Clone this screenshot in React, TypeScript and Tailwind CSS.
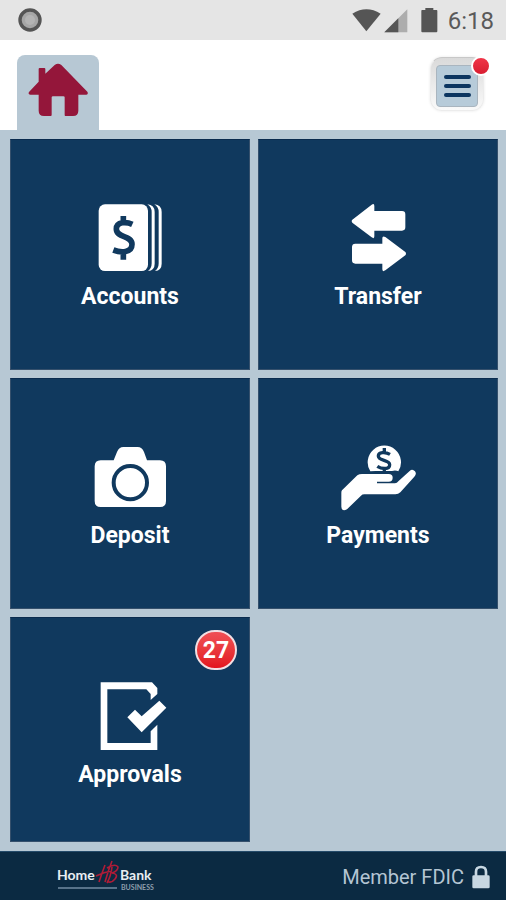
import type { ReactNode } from 'react';

function StatusBar() {
  return (
    <div className="flex h-10 shrink-0 items-center bg-[#e5e5e5] pl-[18px] pr-3 text-[#5a5a5a]">
      <svg width="24" height="24" viewBox="0 0 24 24" aria-hidden="true">
        <circle cx="12" cy="12" r="10" fill="#a6a6a6" stroke="#555" strokeWidth="3.4" />
        <circle cx="12" cy="12" r="5" fill="#b4b4b4" />
      </svg>
      <svg className="ml-auto" width="88" height="26" viewBox="0 0 264 78" aria-hidden="true">
        <path d="M1 20 Q43 -6 86 20 L43 73Z" fill="#555" />
        <path d="M166 7 V76 H97Z" fill="#adadad" />
        <path d="M139 34 V76 H97Z" fill="#555" />
        <path d="M210 9 H220 V3 H244 V9 H254 Q256 9 256 12 V73 Q256 76 253 76 H211 Q208 76 208 73 V12 Q208 9 210 9Z" fill="#555" />
      </svg>
      <span className="ml-2 pt-0.5 text-2xl leading-none">6:18</span>
    </div>
  );
}

function Header() {
  return (
    <header className="flex h-[90px] shrink-0 items-start justify-between bg-white pl-[17px] pr-[22px] pt-[15px]">
      <button
        type="button"
        aria-label="Home"
        className="flex h-[75px] w-[82px] justify-center rounded-t-lg bg-[#b7c8d4] pt-2"
      >
        <svg width="60" height="54" viewBox="84 189 180 162" fill="#94163a" aria-hidden="true">
          <path d="M116 207 Q116 204 119 204 H133 Q136 204 136 207 V221 L164 195 Q174 188 184 195 L262 275 Q266 282 259 284 H235 V332 Q235 348 219 348 H196 Q194 348 194 345 V292 Q194 289 190 289 H159 Q155 289 155 292 V345 Q155 348 152 348 H132 Q116 348 116 332 V284 H91 Q83 282 87 276 L116 245Z" />
        </svg>
      </button>
      <button
        type="button"
        aria-label="Menu"
        className="relative mt-0.5 flex size-[54px] justify-center rounded-xl border border-[#ececec] border-t-[#c8c8c8] bg-linear-to-b from-[#dadada] to-[#fafafa] pt-[7px] shadow-[0_0_3px_#e8e8e8]"
      >
        <span className="flex h-[42px] w-[42px] flex-col items-center justify-center gap-[5px] rounded-sm border border-[#a9b5bf] bg-[#b7cbd9]">
          <span className="h-1 w-[27px] rounded-full bg-[#0c3560]" />
          <span className="h-1 w-[27px] rounded-full bg-[#0c3560]" />
          <span className="h-1 w-[27px] rounded-full bg-[#0c3560]" />
        </span>
        <span className="absolute -right-2 -top-0.5 size-5 rounded-full border-2 border-white bg-linear-to-b from-[#f03548] to-[#d81c30]" />
      </button>
    </header>
  );
}

function Tile({ label, badge, children }: { label: string; badge?: number; children: ReactNode }) {
  return (
    <button
      type="button"
      className="relative flex flex-col items-center border border-[#35506c] border-t-[#0a2b4e] bg-[#10395e] pt-16 text-white"
    >
      {children}
      <span className="mt-3 text-[23px] font-bold leading-[26px]">{label}</span>
      {badge !== undefined && (
        <span className="absolute right-3 top-3 flex h-10 w-[42px] items-center justify-center rounded-full border-2 border-[#f2dfe3] bg-linear-to-b from-[#ef4f55] to-[#e3121d] text-[23px] font-bold leading-none">
          {badge}
        </span>
      )}
    </button>
  );
}

function AccountsIcon() {
  return (
    <svg width="120" height="68" viewBox="0 42 360 204" fill="white" aria-hidden="true">
      <rect x="86" y="43" width="148" height="200" rx="19" />
      <path d="M232 43 Q254 45 254 66 V221 Q254 241 234 243 Q245 235 245 220 V66 Q245 51 232 43Z" />
      <path d="M253 43 Q275 45 275 66 V221 Q275 241 255 243 Q266 235 266 220 V66 Q266 51 253 43Z" />
      <path
        d="M187 103 C170 95 139 94 139 117 C139 145 186 135 186 163 C186 189 153 189 130 180 M160 78 V98 M160 187 V209"
        fill="none"
        stroke="#10395e"
        strokeWidth="17"
      />
    </svg>
  );
}

function TransferIcon() {
  return (
    <svg width="120" height="68" viewBox="0 42 360 204" fill="white" aria-hidden="true">
      <path d="M103 89 L161 44 Q169 39 169 48 V63 H252 Q262 63 262 73 V112 Q262 122 252 122 H169 V139 Q169 148 161 142 L103 98 Q99 93 103 89Z" />
      <path d="M262 186 L202 141 Q193 136 193 145 V161 H112 Q102 161 102 171 V211 Q102 221 112 221 H193 V238 Q193 247 202 241 L262 196 Q266 191 262 186Z" />
    </svg>
  );
}

function DepositIcon() {
  return (
    <svg width="120" height="68" viewBox="0 39 360 204" fill="white" aria-hidden="true">
      <path d="M92 91 H131 L141 66 Q147 51 160 51 H203 Q216 51 222 66 L231 91 H270 Q288 91 288 109 V213 Q288 231 270 231 H92 Q74 231 74 213 V109 Q74 91 92 91Z" />
      <circle cx="181" cy="158" r="50" fill="none" stroke="#10395e" strokeWidth="12" />
    </svg>
  );
}

function PaymentsIcon() {
  return (
    <svg width="120" height="68" viewBox="0 39 360 204" fill="white" aria-hidden="true">
      <path d="M157 124 A50 50 0 1 1 241 124 Q233 120 222 123 H178 Q170 122 157 124Z" />
      <path
        d="M216 73 C202 65 181 66 181 78 C181 94 215 88 215 104 C215 120 190 117 178 109 M199 54 V68 M199 113 V124"
        fill="none"
        stroke="#10395e"
        strokeWidth="10"
      />
      <path d="M72 181 L118 136 Q124 132 132 132 H212 Q224 132 224 143 Q224 155 212 155 H177 V160 H231 Q237 160 241 154 L275 123 Q283 115 291 124 Q297 132 289 140 L247 187 Q241 193 232 193 H139 Q133 193 129 197 L87 238 Q71 246 70 230 V188 Q70 184 72 181Z" />
    </svg>
  );
}

function ApprovalsIcon() {
  return (
    <svg width="120" height="68" viewBox="0 36 360 204" fill="white" aria-hidden="true">
      <path d="M92 37 H246 L262 54 V72 L242 90 V72 L229 58 H112 V219 H242 V184 L262 164 V240 H92Z" />
      <path d="M172 142 L195 119 L215 139 L268 92 L289 113 L215 187Z" />
    </svg>
  );
}

function Footer() {
  return (
    <footer className="flex h-[49px] shrink-0 items-center border-t border-[#244a69] bg-[#0b2a42] pl-[57px] pr-4 pt-0.5">
      <svg
        width="100"
        height="34"
        viewBox="0 0 100 34"
        role="img"
        aria-label="Home Bank Business"
        fontFamily="Lato, sans-serif"
      >
        <text x="0" y="20" fontSize="14" fontWeight="700" fill="#e9eef3">Home</text>
        <text x="63" y="20" fontSize="14" fontWeight="700" fill="#e9eef3">Bank</text>
        <path
          d="M48 5 Q45 13 42 22 M55 1 Q51 11 48 22 M39 16 Q47 12 55 11 M55 7 Q54 16 50 23 M50 8 Q58 3 61 7 Q61 11 55 13 Q62 14 58 19 Q54 24 50 21"
          fill="none"
          stroke="#b01c37"
          strokeWidth="1.6"
        />
        <path d="M1 28 H60" stroke="#58738a" strokeWidth="2" />
        <text x="64" y="30" fontSize="7" fontWeight="700" fill="#8d9ead">BUSINESS</text>
      </svg>
      <span className="ml-auto text-xl leading-6 text-[#b4c5d3]">Member FDIC</span>
      <svg className="ml-2" width="18" height="24" viewBox="0 0 54 72" aria-hidden="true">
        <path d="M12 34 V20 Q12 6 27 6 Q42 6 42 20 V34" fill="none" stroke="#c7d7e2" strokeWidth="8" />
        <rect x="1" y="31" width="52" height="39" rx="4" fill="#c7d7e2" />
      </svg>
    </footer>
  );
}

export default function App() {
  return (
    <div className="flex min-h-screen flex-col bg-[#b7c8d4] font-['Roboto',sans-serif]">
      <StatusBar />
      <Header />
      <main className="grid flex-1 grid-cols-2 grid-rows-[231px_231px_minmax(225px,1fr)] gap-2 py-[9px] pl-[10px] pr-2">
        <Tile label="Accounts">
          <AccountsIcon />
        </Tile>
        <Tile label="Transfer">
          <TransferIcon />
        </Tile>
        <Tile label="Deposit">
          <DepositIcon />
        </Tile>
        <Tile label="Payments">
          <PaymentsIcon />
        </Tile>
        <Tile label="Approvals" badge={27}>
          <ApprovalsIcon />
        </Tile>
      </main>
      <Footer />
    </div>
  );
}
